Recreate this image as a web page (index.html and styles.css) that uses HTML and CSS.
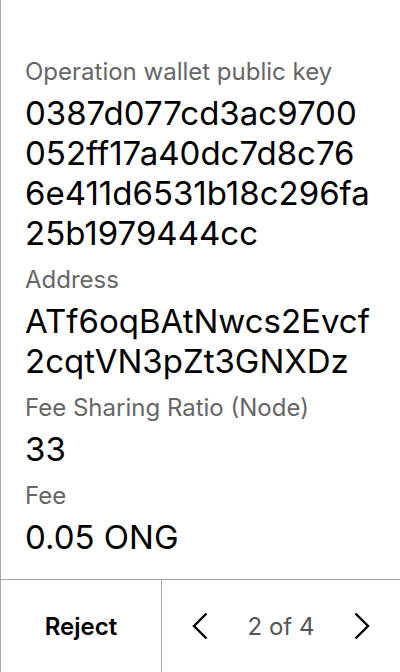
FILE: index.html
```html
<!DOCTYPE html>
<html>
<head>
<meta charset="utf-8">
<link rel="stylesheet" href="styles.css">
</head>
<body>
<div class="screen">
  <main class="content">
    <div class="field">
      <div class="label">Operation wallet public key</div>
      <div class="value">0387d077cd3ac9700<br>052ff17a40dc7d8c76<br>6e411d6531b18c296fa<br>25b1979444cc</div>
    </div>
    <div class="field">
      <div class="label">Address</div>
      <div class="value">ATf6oqBAtNwcs2Evcf<br>2cqtVN3pZt3GNXDz</div>
    </div>
    <div class="field">
      <div class="label">Fee Sharing Ratio (Node)</div>
      <div class="value">33</div>
    </div>
    <div class="field">
      <div class="label">Fee</div>
      <div class="value">0.05 ONG</div>
    </div>
  </main>
  <footer class="bar">
    <div class="reject">Reject</div>
    <div class="pager">
      <svg class="chev" width="16" height="28" viewBox="0 0 16 28"><path d="M14.5 1.5 L2 14 L14.5 26.5" fill="none" stroke="#000" stroke-width="2.4" stroke-linecap="butt" stroke-linejoin="miter"/></svg>
      <span class="count">2 of 4</span>
      <svg class="chev" width="16" height="28" viewBox="0 0 16 28"><path d="M1.5 1.5 L14 14 L1.5 26.5" fill="none" stroke="#000" stroke-width="2.4" stroke-linecap="butt" stroke-linejoin="miter"/></svg>
    </div>
  </footer>
</div>
</body>
</html>
```
FILE: styles.css
```css
html, body {
  margin: 0;
  padding: 0;
  background: #fff;
}
body {
  font-family: Inter, "Noto Sans", sans-serif;
  color: #000;
}
.screen {
  width: 400px;
  height: 672px;
  box-sizing: border-box;
  border-left: 1px solid #a8a8a8;
  display: flex;
  flex-direction: column;
}
.content {
  flex: 1;
  padding: 58px 0 0 24px;
  display: flex;
  flex-direction: column;
  gap: 13px;
}
.label {
  font-size: 24px;
  line-height: 28px;
  color: #666;
}
.value {
  font-size: 33px;
  line-height: 40px;
  margin-top: 7px;
  color: #000;
}
.bar {
  height: 92px;
  border-top: 1px solid #a8a8a8;
  display: flex;
}
.reject {
  width: 160px;
  display: flex;
  align-items: center;
  justify-content: center;
  font-size: 24px;
  font-weight: 600;
  border-right: 1px solid #a8a8a8;
}
.pager {
  flex: 1;
  display: flex;
  align-items: center;
  justify-content: space-between;
  padding: 0 30px 0 30px;
}
.count {
  font-size: 24px;
  color: #555;
}
```
